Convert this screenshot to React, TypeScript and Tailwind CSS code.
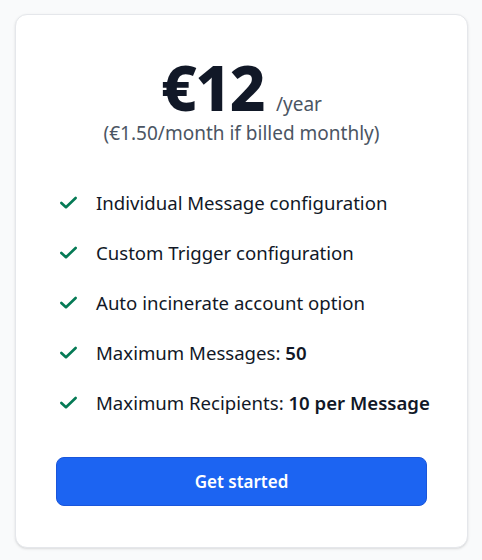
const features: { text: string; bold?: string }[] = [
  { text: "Individual Message configuration" },
  { text: "Custom Trigger configuration" },
  { text: "Auto incinerate account option" },
  { text: "Maximum Messages: ", bold: "50" },
  { text: "Maximum Recipients: ", bold: "10 per Message" },
];

function Check() {
  return (
    <svg className="w-[21px] h-[21px] shrink-0 text-[#057a55]" viewBox="0 0 20 20" fill="none">
      <path d="M3.2 10.4l4.4 4.1 9.2-8.8" stroke="currentColor" strokeWidth="2.5" strokeLinecap="round" strokeLinejoin="round" />
    </svg>
  );
}

export default function App() {
  return (
    <div className="min-h-[560px] bg-[#f9fafb] pt-[14px] px-[15px] font-['Noto_Sans','Open_Sans',sans-serif]">
      <div className="w-[453px] h-[534px] bg-white border border-[#e5e7eb] rounded-xl shadow-sm px-10 pt-[41px]">
        <div className="flex items-baseline justify-center h-[62px]">
          <span className="text-[62px] leading-none font-extrabold text-[#111827] tracking-tight">€12</span>
          <span className="ml-3 text-[19px] leading-none text-[#4b5563]">/year</span>
        </div>
        <p className="text-center text-[19px] leading-[24px] mt-[3px] text-[#4b5563]">(€1.50/month if billed monthly)</p>

        <ul className="mt-[44px] flex flex-col gap-[23px]">
          {features.map((f) => (
            <li key={f.text} className="flex items-center gap-[17px] pl-[2px] text-[18.6px] leading-[27px] text-[#111827] whitespace-nowrap">
              <Check />
              <span>
                {f.text}
                {f.bold && <span className="font-semibold">{f.bold}</span>}
              </span>
            </li>
          ))}
        </ul>

        <button className="mt-[41px] w-full h-[49px] rounded-lg bg-[#1c64f2] border border-[#1a56db] text-white text-[17px] font-semibold">
          Get started
        </button>
      </div>
    </div>
  );
}
